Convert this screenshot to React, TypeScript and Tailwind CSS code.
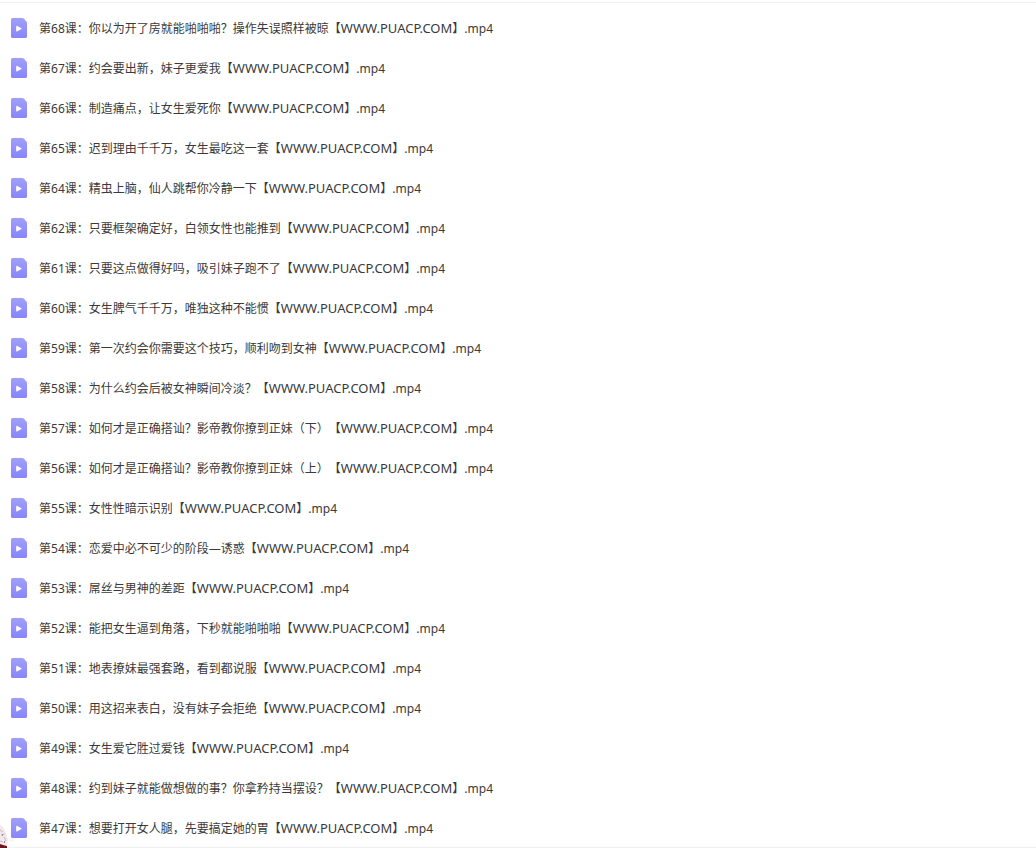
const SITE = 'WWW.PUACP.COM';

const lessons = [
  { no: 68, title: '你以为开了房就能啪啪啪？操作失误照样被晾' },
  { no: 67, title: '约会要出新，妹子更爱我' },
  { no: 66, title: '制造痛点，让女生爱死你' },
  { no: 65, title: '迟到理由千千万，女生最吃这一套' },
  { no: 64, title: '精虫上脑，仙人跳帮你冷静一下' },
  { no: 62, title: '只要框架确定好，白领女性也能推到' },
  { no: 61, title: '只要这点做得好吗，吸引妹子跑不了' },
  { no: 60, title: '女生脾气千千万，唯独这种不能惯' },
  { no: 59, title: '第一次约会你需要这个技巧，顺利吻到女神' },
  { no: 58, title: '为什么约会后被女神瞬间冷淡？' },
  { no: 57, title: '如何才是正确搭讪？影帝教你撩到正妹（下）' },
  { no: 56, title: '如何才是正确搭讪？影帝教你撩到正妹（上）' },
  { no: 55, title: '女性性暗示识别' },
  { no: 54, title: '恋爱中必不可少的阶段—诱惑' },
  { no: 53, title: '屌丝与男神的差距' },
  { no: 52, title: '能把女生逼到角落，下秒就能啪啪啪' },
  { no: 51, title: '地表撩妹最强套路，看到都说服' },
  { no: 50, title: '用这招来表白，没有妹子会拒绝' },
  { no: 49, title: '女生爱它胜过爱钱' },
  { no: 48, title: '约到妹子就能做想做的事？你拿矜持当摆设？' },
  { no: 47, title: '想要打开女人腿，先要搞定她的胃' },
];

function VideoIcon() {
  return (
    <svg width="16" height="20" viewBox="0 0 16 20" className="shrink-0" aria-hidden="true">
      <defs>
        <linearGradient id="video-fill" x1="0" y1="0" x2="0" y2="1">
          <stop offset="0" stopColor="#a19ffb" />
          <stop offset="1" stopColor="#8886fa" />
        </linearGradient>
      </defs>
      <path d="M1.5 0H11.2c.6 0 1.1.2 1.5.6l2.7 2.8c.4.4.6.9.6 1.5V18.5a1.5 1.5 0 0 1-1.5 1.5h-13A1.5 1.5 0 0 1 0 18.5v-17A1.5 1.5 0 0 1 1.5 0Z" fill="url(#video-fill)" />
      <path d="M5.2 8.3c0-.5.4-.7.8-.5l4.4 2.4c.4.2.4.6 0 .8L6 13.4c-.4.2-.8 0-.8-.5Z" fill="#fff" />
    </svg>
  );
}

// desktop mascot peeking in from the left edge
function Mascot() {
  return (
    <svg width="14" height="24" viewBox="0 0 14 24" className="absolute bottom-0 left-0" aria-hidden="true">
      <path d="M0 1C3 2 5 6 6 10l2 5-1 6H0Z" fill="#f1e9ec" />
      <path d="M0 6l3 2M1 11l4-1M4 13l2 4M0 17l3 1" stroke="#cbbabf" strokeWidth="1" fill="none" />
      <path d="M2 10h1v2H2ZM4 17h1v2H4Z" fill="#9d8790" />
      <path d="M0 20l3 1 4 1v2H0Z" fill="#6d1420" />
      <path d="M9 15l3-1 2 2-1 2-3-1Z" fill="#f6f3fb" />
    </svg>
  );
}

export default function App() {
  return (
    <main className="relative bg-white pt-[2px] font-['Noto_Sans','Noto_Sans_CJK_SC',sans-serif] text-xs text-[#3a3a3a] [text-spacing-trim:space-all]">
      <ul className="border-t border-[#f0f0f0] pt-[5px]">
        {lessons.map(({ no, title }) => (
          <li key={no} className="h-10 border-[#f0f0f0] last:border-b">
            <a href={`#lesson-${no}`} className="flex h-10 items-center gap-3 pl-[11px] whitespace-nowrap">
              <VideoIcon />
              <span className="pt-[2px]">
                第{no}课：{title}【<span className="text-[13px]">{SITE}</span>】.mp4
              </span>
            </a>
          </li>
        ))}
      </ul>
      <Mascot />
    </main>
  );
}
